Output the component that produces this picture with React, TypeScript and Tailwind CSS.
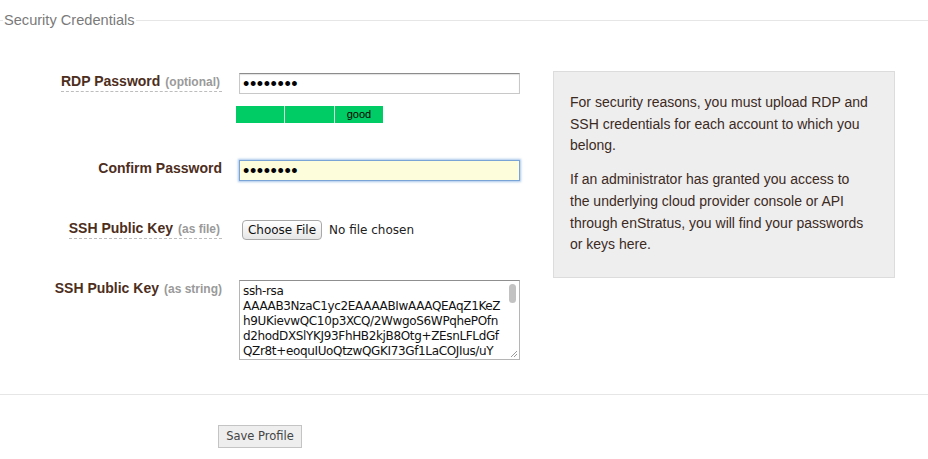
import React from "react";

const keyLines = [
    "ssh-rsa",
    "AAAAB3NzaC1yc2EAAAABIwAAAQEAqZ1KeZ",
    "h9UKievwQC10p3XCQ/2WwgoS6WPqhePOfn",
    "d2hodDXSlYKJ93FhHB2kjB8Otg+ZEsnLFLdGf",
    "QZr8t+eoquIUoQtzwQGKI73Gf1LaCOJIus/uY",
];

function FieldLabel({ title, hint, dashed }: { title: string; hint?: string; dashed?: boolean }) {
    return (
        <div className="flex w-[222px] shrink-0 justify-end">
            <span
                className={
                    "whitespace-nowrap text-[14px] leading-[16px] font-bold text-[#4d2e1d] " +
                    (dashed ? "border-b border-dashed border-[#bdbdbd] pb-[1px] pr-[2px]" : "")
                }
            >
                {title}
                {hint && <span className="ml-[5px] text-[12px] text-[#9a9a9a]">({hint})</span>}
            </span>
        </div>
    );
}

function Dots() {
    return (
        <span className="text-[18px] leading-none tracking-[0.6px] text-black">••••••••</span>
    );
}

export default function App() {
    return (
        <div className="relative h-[459px] w-[928px] overflow-hidden bg-white font-['Liberation_Sans',Arial,sans-serif]">
            {/* legend */}
            <div className="mt-[12px] flex h-[16px] items-center">
                <div className="h-px w-[3px] bg-[#e6e6e6]" />
                <span className="px-[1px] text-[14.6px] leading-[16px] text-[#7a7a7a]">Security Credentials</span>
                <div className="h-px flex-1 bg-[#e6e6e6]" />
            </div>

            <div className="mt-[45px] flex items-start">
                {/* form */}
                <div className="flex w-[520px] flex-col">
                    <div className="flex items-start gap-[17px]">
                        <FieldLabel title="RDP Password" hint="optional" dashed />
                        <div className="flex flex-col">
                            <div className="flex h-[21px] w-[281px] items-center border border-[#c8c8c8] border-t-[#8c8c8c] bg-white pl-[3px] shadow-[inset_0_1px_1px_rgba(0,0,0,0.12)]">
                                <Dots />
                            </div>
                            <div className="-ml-[3px] mt-[12px] flex h-[17px] w-[147px]">
                                <div className="w-[48px] bg-[#00cc66]" />
                                <div className="w-px bg-[#dcdcdc]" />
                                <div className="w-[49px] bg-[#00cc66]" />
                                <div className="w-px bg-[#dcdcdc]" />
                                <div className="flex w-[48px] items-center justify-center bg-[#00cc66] text-[11px] text-black">
                                    good
                                </div>
                            </div>
                        </div>
                    </div>

                    <div className="mt-[37px] flex items-start gap-[17px]">
                        <FieldLabel title="Confirm Password" />
                        <div className="flex h-[21px] w-[281px] items-center border border-[#7ba4d6] bg-[#fdfddc] pl-[3px] shadow-[0_0_2px_1px_rgba(110,160,220,0.6)]">
                            <Dots />
                        </div>
                    </div>

                    <div className="mt-[39px] flex items-start gap-[17px]">
                        <FieldLabel title="SSH Public Key" hint="as file" dashed />
                        <div className="ml-[3px] flex items-center gap-[7px] font-['DejaVu_Sans',sans-serif] text-[12px]">
                            <button className="h-[20px] w-[80px] rounded-[4px] border border-[#a9a9a9] bg-gradient-to-b from-white to-[#e6e6e6] leading-[18px] text-[#111]">
                                Choose File
                            </button>
                            <span className="text-[#222]">No file chosen</span>
                        </div>
                    </div>

                    <div className="mt-[40px] flex items-start gap-[17px]">
                        <FieldLabel title="SSH Public Key" hint="as string" />
                        <div className="relative h-[80px] w-[281px] overflow-hidden border border-[#b5b5b5] border-t-[#8f8f8f] bg-white pl-[3px] pt-[3px] font-['DejaVu_Sans',sans-serif] text-[12px] leading-[15px] tracking-[-0.35px] text-[#111]">
                            {keyLines.map((l) => (
                                <div key={l} className="whitespace-nowrap">
                                    {l}
                                </div>
                            ))}
                            <div className="absolute right-0 top-0 h-full w-[14px] bg-white">
                                <div className="mx-auto mt-[3px] h-[19px] w-[7px] rounded-full bg-[#c2c2c2]" />
                            </div>
                            <svg className="absolute bottom-[1px] right-[1px]" width="9" height="9" viewBox="0 0 9 9">
                                <path d="M8 2L2 8M8 5L5 8" stroke="#9a9a9a" strokeWidth="1" />
                            </svg>
                        </div>
                    </div>
                </div>

                {/* info box */}
                <div className="-mt-[2px] ml-[33px] h-[207px] w-[342px] whitespace-nowrap border border-[#dcdcdc] bg-[#eeeeee] pl-[16px] pt-[20px] text-[14px] leading-[21.7px] text-[#3c2a1e]">
                    <p>
                        For security reasons, you must upload RDP and
                        <br />
                        SSH credentials for each account to which you
                        <br />
                        belong.
                    </p>
                    <p className="mt-[12px]">
                        If an administrator has granted you access to
                        <br />
                        the underlying cloud provider console or API
                        <br />
                        through enStratus, you will find your passwords
                        <br />
                        or keys here.
                    </p>
                </div>
            </div>

            <div className="mt-[34px] h-px w-full bg-[#e6e6e6]" />

            <div className="ml-[218px] mt-[28px]">
                <button className="h-[23px] w-[84px] border border-[#c4c4c4] bg-[#eeeeee] font-['DejaVu_Sans',sans-serif] text-[11.5px] text-[#444]">
                    Save Profile
                </button>
            </div>
        </div>
    );
}
